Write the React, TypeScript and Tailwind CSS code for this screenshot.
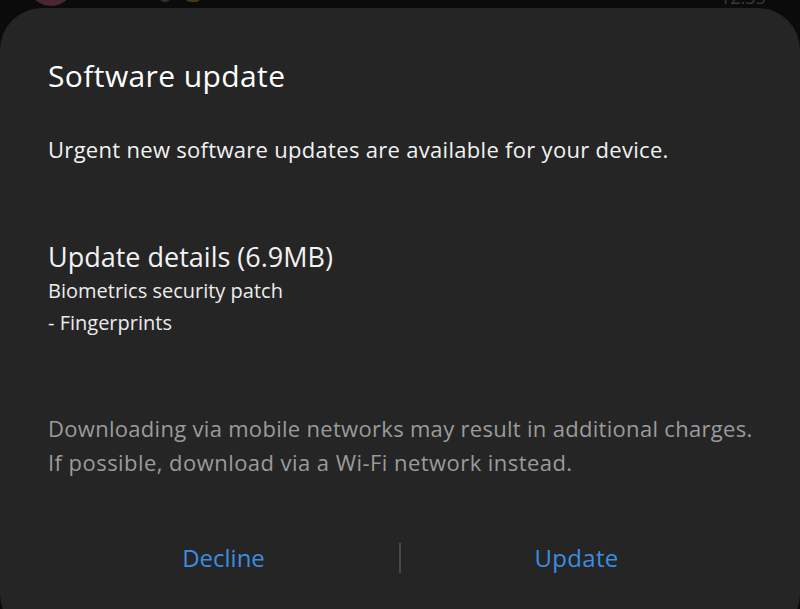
export default function App() {
  return (
    <div
      className="relative h-[609px] w-[800px] overflow-hidden bg-[#0b0b0b]"
      style={{ fontFamily: '"Open Sans", "Noto Sans", sans-serif' }}
    >
      {/* dimmed status bar peeking above the sheet */}
      <div className="relative h-2 overflow-hidden">
        <div className="absolute left-[28px] top-[-40px] h-[46px] w-[46px] rounded-full bg-[#4a2630]" />
        <div className="absolute left-[160px] top-[-6px] h-[8px] w-[10px] rounded-sm bg-[#2e2e2e]" />
        <div className="absolute left-[186px] top-[-8px] h-[10px] w-[14px] rounded-sm bg-[#4a3418]" />
        <div className="absolute left-[218px] top-[-10px] text-[12px] leading-none text-[#3a3a3a]">Mobile</div>
        <div className="absolute left-[720px] top-[-12px] text-[18px] leading-none text-[#3a3a3a]">12:35</div>
      </div>

      <div className="flex h-[628px] flex-col rounded-[42px] bg-[#252525] px-12 text-white">
        <h1 className="mt-[50px] text-[30px] leading-[36px] font-normal tracking-[0.4px]">Software update</h1>
        <p className="mt-[41px] text-[22px] leading-[28px] text-[#f2f2f2] tracking-[0.3px]">
          Urgent new software updates are available for your device.
        </p>

        <h2 className="mt-[78px] text-[27px] leading-[32px] font-normal text-[#f2f2f2]">
          Update details (6.9MB)
        </h2>
        <p className="mt-[2px] text-[20px] leading-[32px] text-[#ececec]">Biometrics security patch</p>
        <p className="text-[20px] leading-[32px] text-[#ececec]">- Fingerprints</p>

        <div className="mt-[72px] whitespace-nowrap text-[22px] leading-[34px] text-[#9b9b9b] tracking-[0.3px]">
          <p>Downloading via mobile networks may result in additional charges.</p>
          <p className="tracking-[0.45px]">If possible, download via a Wi-Fi network instead.</p>
        </div>

        <div className="mt-[64px] flex items-center">
          <button className="flex-1 text-center text-[24px] leading-[30px] text-[#3b8de0]">Decline</button>
          <div className="h-[30px] w-[2px] bg-[#4a4a4a]" />
          <button className="flex-1 text-center text-[24px] leading-[30px] text-[#3b8de0] tracking-[0.3px]">Update</button>
        </div>
      </div>
    </div>
  );
}
